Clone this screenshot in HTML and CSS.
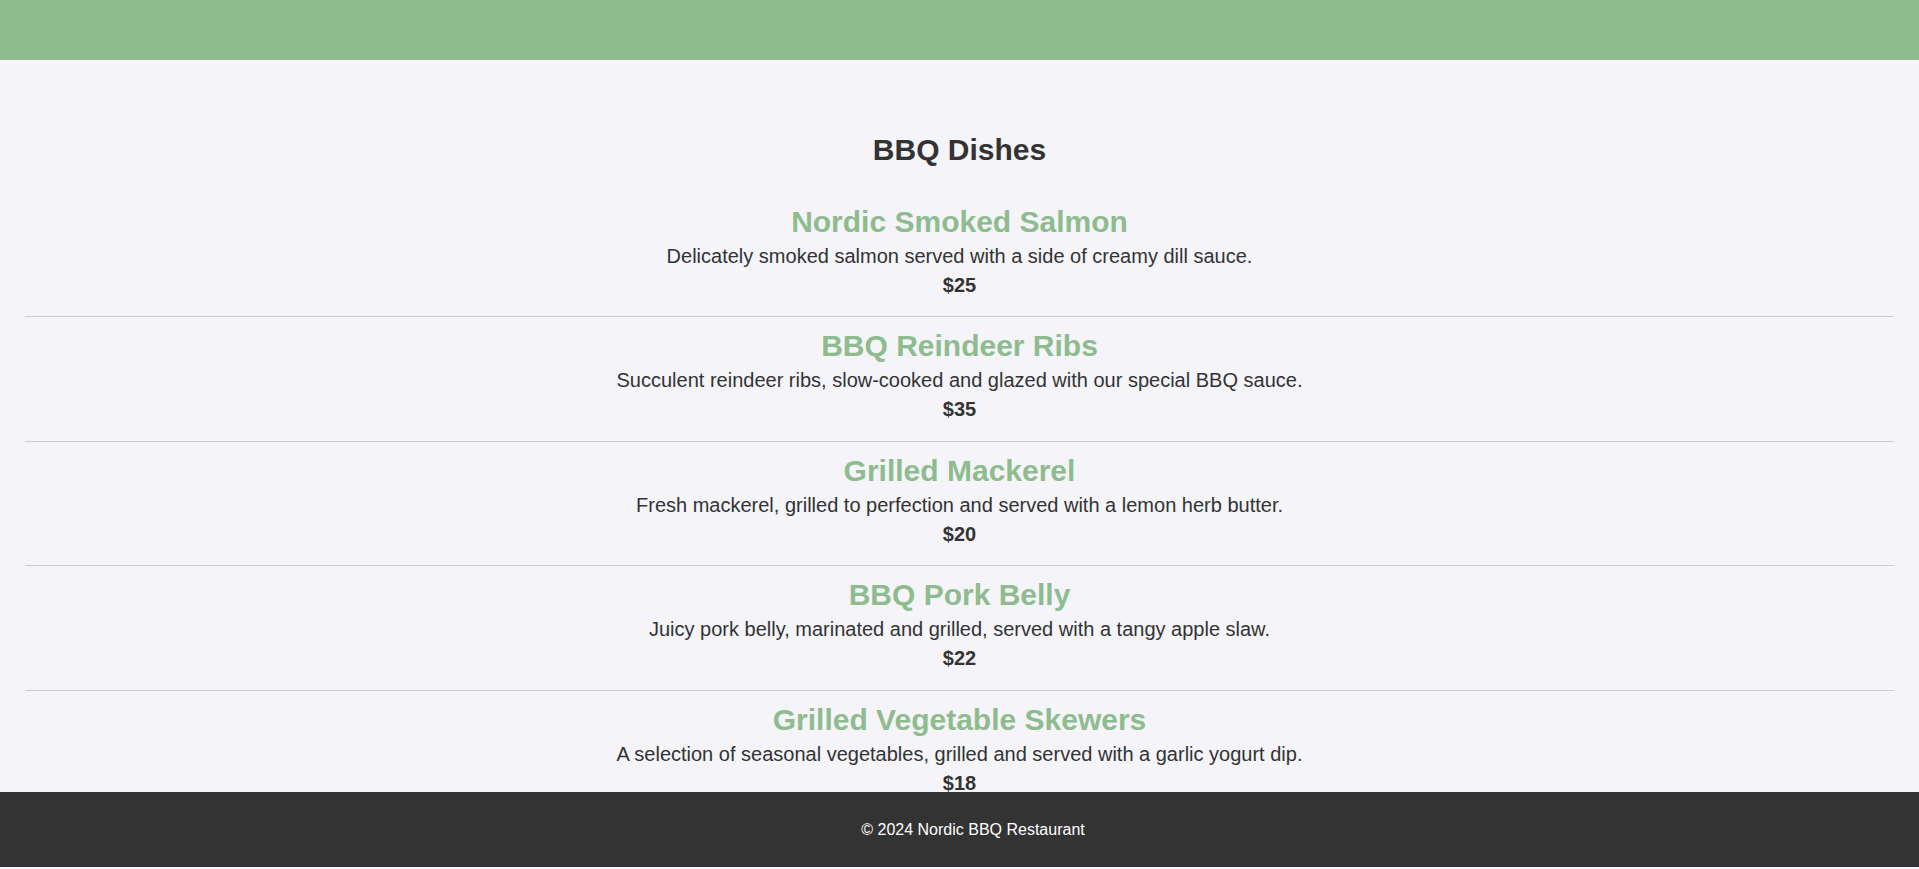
FILE: index.html
```html
<!DOCTYPE html>
<html lang="en">
<head>
<meta charset="utf-8">
<title>Nordic BBQ Restaurant</title>
<link rel="stylesheet" href="styles.css">
</head>
<body>
<header class="site-header"></header>
<main class="menu">
  <h2 class="menu-title">BBQ Dishes</h2>
  <div class="dish">
    <h3 class="dish-name">Nordic Smoked Salmon</h3>
    <p class="dish-desc">Delicately smoked salmon served with a side of creamy dill sauce.</p>
    <p class="dish-price">$25</p>
  </div>
  <div class="dish">
    <h3 class="dish-name">BBQ Reindeer Ribs</h3>
    <p class="dish-desc">Succulent reindeer ribs, slow-cooked and glazed with our special BBQ sauce.</p>
    <p class="dish-price">$35</p>
  </div>
  <div class="dish">
    <h3 class="dish-name">Grilled Mackerel</h3>
    <p class="dish-desc">Fresh mackerel, grilled to perfection and served with a lemon herb butter.</p>
    <p class="dish-price">$20</p>
  </div>
  <div class="dish">
    <h3 class="dish-name">BBQ Pork Belly</h3>
    <p class="dish-desc">Juicy pork belly, marinated and grilled, served with a tangy apple slaw.</p>
    <p class="dish-price">$22</p>
  </div>
  <div class="dish">
    <h3 class="dish-name">Grilled Vegetable Skewers</h3>
    <p class="dish-desc">A selection of seasonal vegetables, grilled and served with a garlic yogurt dip.</p>
    <p class="dish-price">$18</p>
  </div>
</main>
<footer class="site-footer">© 2024 Nordic BBQ Restaurant</footer>
</body>
</html>
```
FILE: styles.css
```css
html {
  background: #dce2e7;
}
body {
  margin: 0;
  font-family: "Liberation Sans", Arial, sans-serif;
  font-size: 20px;
  color: #333333;
  background: #f4f4f9;
  min-height: 100vh;
}
.site-header {
  height: 60px;
  background: #8fbc8f;
}
.menu {
  padding: 73px 25px 120px;
  text-align: center;
}
.menu-title {
  margin: 0 0 26px;
  font-size: 30px;
  line-height: 34px;
  font-weight: bold;
  color: #333333;
}
.dish {
  padding: 12px 0 19.4px;
  border-bottom: 1px solid #cccccc;
}
.dish-name {
  margin: 0 0 6px;
  font-size: 30px;
  line-height: 34px;
  font-weight: bold;
  color: #8fbc8f;
}
.dish-desc {
  margin: 0 0 6px;
  line-height: 23px;
}
.dish-price {
  margin: 0;
  line-height: 23px;
  font-weight: bold;
}
.site-footer {
  position: fixed;
  left: 0;
  right: 0;
  bottom: 2px;
  padding: 28px 0 28px 27px;
  line-height: 19px;
  font-size: 16px;
  text-align: center;
  color: #ffffff;
  background: #333333;
}
```
